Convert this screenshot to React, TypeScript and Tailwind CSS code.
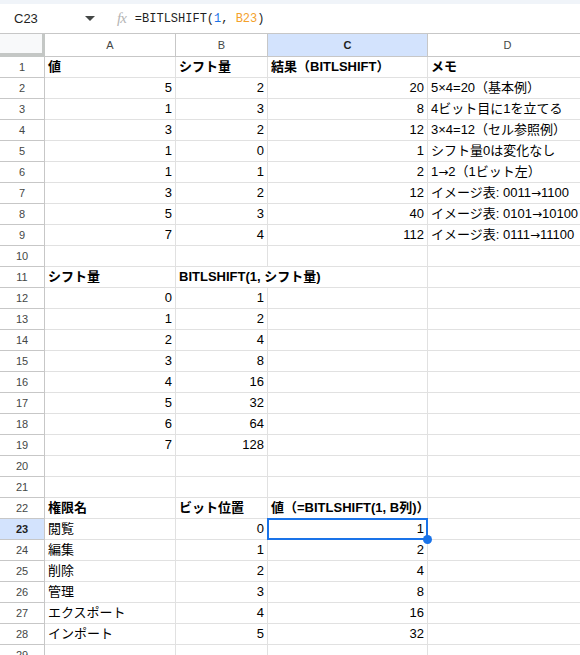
import React from "react";

type Align = "l" | "r";
type Cell = { v: string; a?: Align; b?: boolean; spill?: boolean; nb?: boolean };

const cols = [
  { key: "A", w: "w-[131px]" },
  { key: "B", w: "w-[92px]" },
  { key: "C", w: "w-[160px]" },
  { key: "D", w: "w-[160px]" },
];

const n = (v: number | string): Cell => ({ v: String(v), a: "r" });
const t = (v: string): Cell => ({ v, a: "l" });
const h = (v: string): Cell => ({ v, a: "l", b: true });
const e: Cell = { v: "" };

const rows: Cell[][] = [
  [h("値"), h("シフト量"), h("結果（BITLSHIFT）"), h("メモ")],
  [n(5), n(2), n(20), t("5×4=20（基本例）")],
  [n(1), n(3), n(8), t("4ビット目に1を立てる")],
  [n(3), n(2), n(12), t("3×4=12（セル参照例）")],
  [n(1), n(0), n(1), t("シフト量0は変化なし")],
  [n(1), n(1), n(2), t("1→2（1ビット左）")],
  [n(3), n(2), n(12), t("イメージ表: 0011→1100")],
  [n(5), n(3), n(40), t("イメージ表: 0101→10100")],
  [n(7), n(4), n(112), t("イメージ表: 0111→11100")],
  [e, e, e, e],
  [h("シフト量"), { v: "BITLSHIFT(1, シフト量)", a: "l", b: true, spill: true, nb: true }, e, e],
  [n(0), n(1), e, e],
  [n(1), n(2), e, e],
  [n(2), n(4), e, e],
  [n(3), n(8), e, e],
  [n(4), n(16), e, e],
  [n(5), n(32), e, e],
  [n(6), n(64), e, e],
  [n(7), n(128), e, e],
  [e, e, e, e],
  [e, e, e, e],
  [h("権限名"), h("ビット位置"), { v: "値（=BITLSHIFT(1, B列)）", a: "l", b: true, spill: true }, e],
  [t("閲覧"), n(0), n(1), e],
  [t("編集"), n(1), n(2), e],
  [t("削除"), n(2), n(4), e],
  [t("管理"), n(3), n(8), e],
  [t("エクスポート"), n(4), n(16), e],
  [t("インポート"), n(5), n(32), e],
  [e, e, e, e],
];

const SEL_ROW = 23;
const SEL_COL = 2;

// the arrow in Liberation Sans is tiny, the sheet shows a wider one
const withArrows = (s: string) =>
  s.split("→").flatMap((part, i) =>
    i === 0
      ? [part]
      : [
          <span key={i} className="[font-family:'DejaVu_Sans',sans-serif] text-[12px]">
            →
          </span>,
          part,
        ]
  );

const FormulaBar = () => (
  <div className="h-[34px] border-b border-[#c7c7c7] bg-white flex flex-col">
    <div className="h-[4px] bg-[#f0f4f9]" />
    <div className="flex-1 flex items-center">
      <div className="w-[70px] pl-[14px] text-[13px] text-[#1f1f1f]">C23</div>
      <svg width="10" height="6" viewBox="0 0 10 6" className="ml-[15px]">
        <path d="M0 0 L10 0 L5 5 Z" fill="#444746" />
      </svg>
      <span className="ml-[22px] text-[15px] italic text-[#b4b4b4] [font-family:'Liberation_Serif',serif] tracking-[-1px]">
        fx
      </span>
      <span className="ml-[9px] text-[12px] text-[#1f1f1f] [font-family:'Liberation_Mono',monospace]">
        =BITLSHIFT(<span className="text-[#1a73e8]">1</span>,{" "}
        <span className="text-[#f4a12b]">B23</span>)
      </span>
    </div>
  </div>
);

const ColumnHeader = () => (
  <div className="flex h-[23px]">
    <div className="w-[45px] shrink-0 bg-[#f8f9fa] border-r-[3px] border-b-[4px] border-[#c4c7c5]" />
    {cols.map((c, i) => (
      <div
        key={c.key}
        className={`${c.w} shrink-0 flex items-center justify-center text-[11px] border-r border-b border-[#c7c7c7] ${
          i === SEL_COL ? "bg-[#d3e3fd] text-[#1f1f1f] font-semibold" : "bg-white text-[#444746]"
        }`}
      >
        {c.key}
      </div>
    ))}
  </div>
);

export default function App() {
  return (
    <div className="w-[580px] h-[655px] overflow-hidden bg-white [font-family:'Liberation_Sans','Noto_Sans_CJK_JP',sans-serif]">
      <FormulaBar />
      <ColumnHeader />
      {rows.map((row, ri) => {
        const num = ri + 1;
        const selRow = num === SEL_ROW;
        return (
          <div key={num} className="flex h-[21px]">
            <div
              className={`w-[45px] shrink-0 flex items-center justify-center text-[11px] border-r border-b border-[#c7c7c7] ${
                selRow ? "bg-[#d3e3fd] text-[#1f1f1f] font-bold" : "bg-white text-[#444746]"
              }`}
            >
              {num}
            </div>
            {row.map((cell, ci) => {
              const sel = selRow && ci === SEL_COL;
              return (
                <div
                  key={ci}
                  className={`${cols[ci].w} shrink-0 relative flex items-center border-b border-[#e1e1e1] whitespace-nowrap text-[13px] text-black px-[3px] ${
                    cell.nb ? "" : "border-r"
                  } ${cell.spill || sel ? "overflow-visible z-10" : "overflow-hidden"} ${
                    cell.a === "r" ? "justify-end" : "justify-start"
                  } ${cell.b ? "font-bold" : ""}`}
                >
                  <span>{withArrows(cell.v)}</span>
                  {sel && (
                    <>
                      <div className="absolute -left-[1px] -top-[1px] -right-[1px] -bottom-[1px] border-2 border-[#1a73e8] pointer-events-none" />
                      <div className="absolute -right-[5px] -bottom-[5px] w-[9px] h-[9px] rounded-full bg-[#1a73e8]" />
                    </>
                  )}
                </div>
              );
            })}
          </div>
        );
      })}
    </div>
  );
}
